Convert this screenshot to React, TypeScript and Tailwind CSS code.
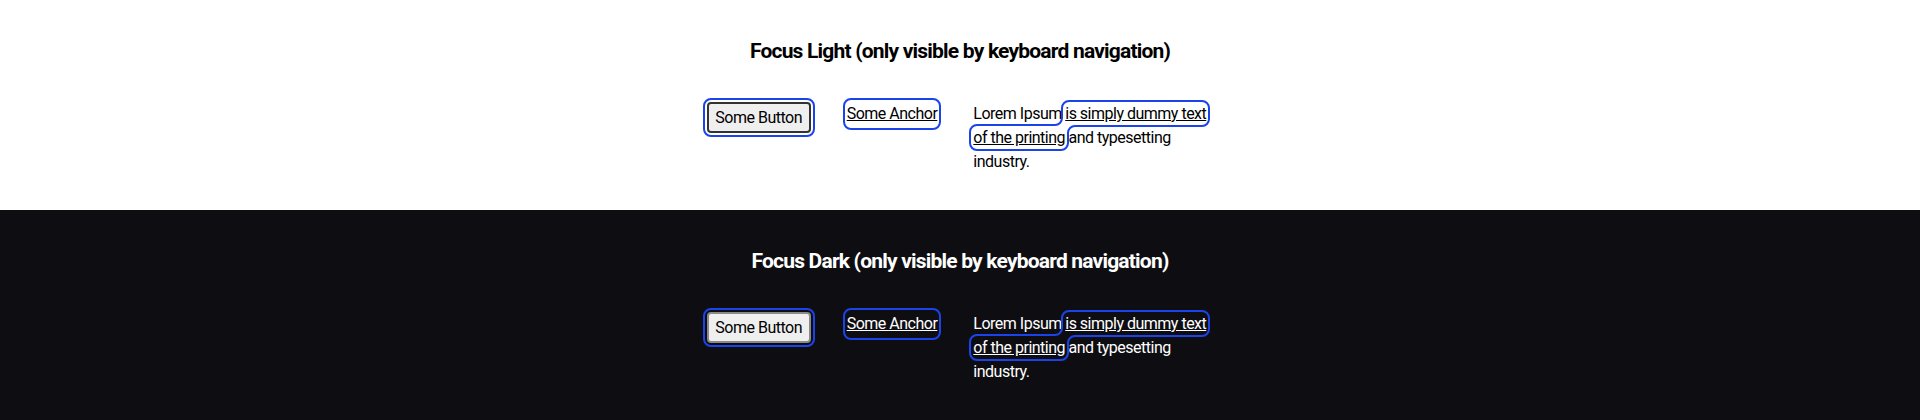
import React from 'react';

const font = "font-['Roboto','Liberation_Sans',sans-serif]";

function FocusSection({ title, dark }: { title: string; dark?: boolean }) {
  const text = dark ? 'text-white' : 'text-black';
  return (
    <section className={`h-[210px] ${dark ? 'bg-[#0e0e12]' : 'bg-white'} ${text} ${font}`}>
      <h2 className="pt-[36px] text-center text-[21px] leading-[30px] font-bold tracking-[-0.8px]">{title}</h2>
      <div className="mt-[36px] flex items-start justify-center gap-[36px] tracking-[-0.5px]">
        <button
          className={`h-[31px] w-[104px] rounded-[4px] border-2 ${dark ? 'border-[#8a8a8a]' : 'border-[#333]'} bg-[#efefef] text-[16px] text-black outline-2 outline-offset-2 outline-[#1a44ea]`}
        >
          Some Button
        </button>
        <a
          href="#"
          className="block text-[16px] leading-[24px] underline rounded-[4px] outline-2 outline-offset-2 outline-[#1a44ea]"
        >
          Some Anchor
        </a>
        <p className="w-[240px] text-[16px] leading-[24px]">
          Lorem Ipsum{' '}
          <a href="#" className="underline rounded-[4px] outline-2 outline-offset-2 outline-[#1a44ea]">
            is simply dummy text of the printing
          </a>{' '}
          and typesetting industry.
        </p>
      </div>
    </section>
  );
}

export default function App() {
  return (
    <div className="w-full">
      <FocusSection title="Focus Light (only visible by keyboard navigation)" />
      <FocusSection title="Focus Dark (only visible by keyboard navigation)" dark />
    </div>
  );
}
